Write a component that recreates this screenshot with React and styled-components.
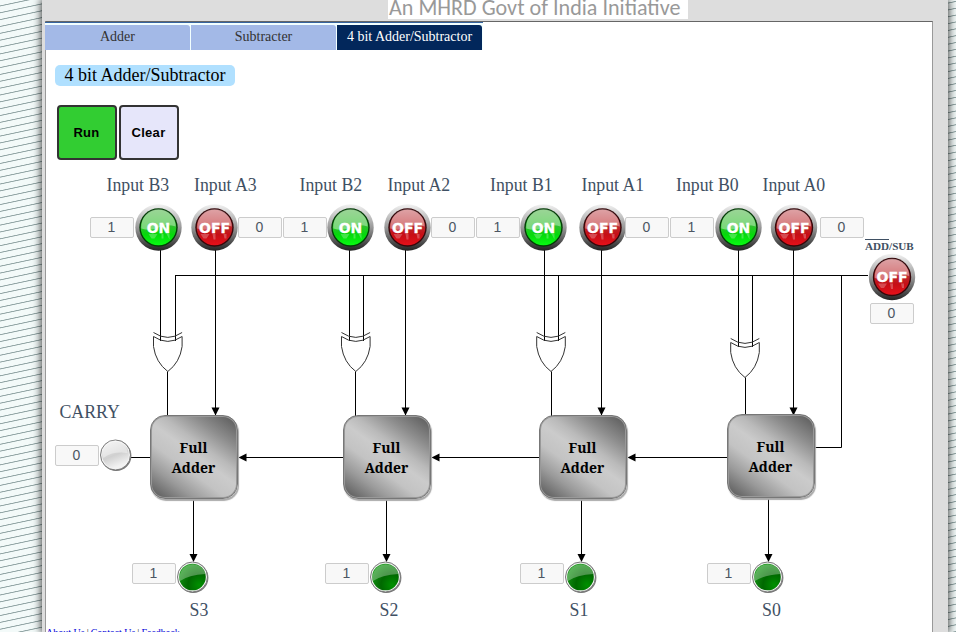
import React from "react";
import styled, { createGlobalStyle, css } from "styled-components";

const Global = createGlobalStyle`
  html, body { margin: 0; padding: 0; overflow: hidden; }
  * { box-sizing: border-box; }
`;

const Page = styled.div`
  display: flex;
  width: 956px;
  height: 632px;
  overflow: hidden;
  background: repeating-linear-gradient(168deg, #f3faf9 0 5px, #93a6a6 5.6px 6px, #f3faf9 6.7px);
  font-family: "Liberation Serif", "Times New Roman", serif;
`;

const Sheet = styled.div`
  width: 906px;
  margin-left: 42px;
  padding: 0 15px 0 3px;
  display: flex;
  flex-direction: column;
  background: #dddddd;
  box-shadow: 0 0 8px 1px rgba(0, 0, 0, 0.75);
`;

const Banner = styled.header`
  height: 21px;
  padding-left: 343px;
  flex: none;
`;

const Tagline = styled.div`
  width: 300px;
  height: 19px;
  padding-left: 1px;
  background: #fff;
  color: #999;
  font: 22.1px/26px Carlito, "Open Sans", sans-serif;
  white-space: nowrap;
`;

const TaglineText = styled.div`
  position: relative;
  top: -5px;
`;

const Panel = styled.main`
  flex: 1;
  display: flex;
  flex-direction: column;
  background: #fff;
  border: solid #999;
  border-top-color: #666;
  border-width: 1px 1px 0 1px;
`;

const Tabs = styled.nav`
  display: flex;
  gap: 1px;
  width: 438px;
  height: 28px;
  margin-left: -1px;
  flex: none;
  border-top: 1px solid #36649f;
  background: #f2ffff;
`;

const Tab = styled.button`
  width: 145px;
  height: 25px;
  margin-top: 2px;
  padding: 0 0 2px;
  border: 0;
  border-top-right-radius: 3px;
  font: 14px/23px "Liberation Serif", serif;
  background: ${(p) => (p.$active ? "#02275b" : "#a3b9e7")};
  color: ${(p) => (p.$active ? "#fff" : "#333")};
`;

const Heading = styled.h1`
  align-self: flex-start;
  width: 180px;
  height: 21px;
  margin: 15px 0 0 9px;
  border-radius: 5px;
  background: #b0e0ff;
  font: 18px/21px "Liberation Serif", serif;
  text-align: center;
  white-space: nowrap;
`;

const Actions = styled.div`
  display: flex;
  gap: 2px;
  margin: 19px 0 0 11px;
`;

const Action = styled.button`
  width: 60px;
  height: 55px;
  padding: 0 1px 0 0;
  border: 2px solid #333;
  border-radius: 4px;
  background: ${(p) => (p.$primary ? "#32cd32" : "#e6e6fa")};
  color: #000;
  font: bold 13px "Liberation Sans", Arial, sans-serif;
  letter-spacing: 0.3px;
`;

/* Free canvas laid over the panel; its coordinates are page coordinates. */
const Canvas = styled.section`
  position: absolute;
  left: 0;
  top: 0;
  width: 956px;
  height: 632px;
  pointer-events: none;
`;

const Wires = styled.svg`
  position: absolute;
  left: 0;
  top: 0;
`;

const at = css`
  position: absolute;
  left: ${(p) => p.$x}px;
  top: ${(p) => p.$y}px;
`;

const Label = styled.span`
  ${at}
  color: #3f5063;
  font-size: 17.8px;
  line-height: 20px;
  white-space: nowrap;
`;

const ModeLabel = styled.span`
  ${at}
  color: #3f5063;
  font-size: 11.1px;
  font-weight: bold;
  line-height: 12px;
`;

const Overlined = styled.span`
  display: inline-block;
  border-top: 1px solid #3f5063;
`;

const Value = styled.output`
  ${at}
  width: 44px;
  height: 21px;
  padding-right: 1px;
  border: 1px solid #ccc;
  border-radius: 2px;
  background: #f8f8f8;
  color: #4d5663;
  font: 14px/19px "Liberation Sans", Arial, sans-serif;
  text-align: center;
`;

const AdderBox = styled.div`
  ${at}
  width: 88px;
  height: 84px;
  display: flex;
  align-items: center;
  justify-content: center;
  padding: 1px 1px 0 0;
  border: 1px solid #777;
  border-radius: 15px;
  background: linear-gradient(33deg, #666 2%, #8c8c8c 16%, #b8b8b8 33%, #c9c9c9 44%, #b4b4b4 56%, #9b9b9b 74%, #656565 96%);
  background: linear-gradient(36deg, #606060 4%, #9a9a9a 22%, #c3c3c3 38%, #cbcbcb 52%, #bababa 62%, #8d8d8d 78%, #606060 96%);
  box-shadow: 1px 2px 1px #aaa, inset 0 0 0 1px #999;
  color: #000;
  font: bold 14px/20px "Noto Serif", "DejaVu Serif Condensed", "DejaVu Serif", serif;
  text-align: center;
`;

const Footer = styled.footer`
  display: flex;
  gap: 2px;
  margin-top: auto;
  height: 4px;
  color: #333;
  font-size: 10px;
  line-height: 10px;
`;

const FooterLink = styled.a`
  color: #0000d8;
  text-decoration: none;
`;

const Toggle = ({ x, y = 227.5, on }) => (
  <g transform={`translate(${x} ${y})`} stroke="none">
    <circle r="23.2" fill="url(#rim)" />
    <circle r="19.2" fill={on ? "#023d05" : "#35070a"} />
    <circle r="17.8" fill={on ? "url(#green)" : "url(#red)"} />
    <path d="M-17.2-1A17.2 17.2 0 0 1 17.2-1Q8-4 0 0T-17.2 1Z" fill="#fff" opacity=".38" />
    <text
      y="5"
      textAnchor="middle"
      textLength={on ? 23.5 : 31}
      lengthAdjust="spacingAndGlyphs"
      fontFamily="DejaVu Sans"
      fontWeight="bold"
      fontSize="13.5"
      fill="#fff"
      stroke="#fff"
      strokeWidth=".3"
    >
      {on ? "ON" : "OFF"}
    </text>
    <path d={on ? "M-10 6.5H-1L-4 11H-7ZM3 6.5H5V11H3ZM8 6.5H11V12Z" : "M-14 6.5H-5L-8 11H-11ZM-2 6.5H1V12H-1ZM9 6.5H12V11H10Z"} fill="#fff" opacity=".25" />
  </g>
);

const Lamp = ({ x, y, lit }) => (
  <g transform={`translate(${x} ${y})`} stroke="none">
    <circle r="15.2" cx=".7" cy=".7" fill="#777" />
    <circle r="15" fill="#f2f2f2" stroke="#777" />
    <circle r="13.3" fill={lit ? "url(#lit)" : "url(#unlit)"} />
    {lit ? (
      <path d="M-12.5 4A12.8 12.8 0 1 1 13-3Q-4-2-12.5 4Z" fill="#fff" opacity=".3" />
    ) : (
      <path d="M-12 3A12.5 12.5 0 1 1 12-2Q-3-4-12 3Z" fill="#fff" opacity=".4" />
    )}
  </g>
);

const Gate = ({ x, y }) => (
  <g transform={`translate(${x} ${y})`} fill="none" stroke="#333" strokeWidth="1">
    <path d="M-14.3 0Q0 9.8 14.3 0" />
    <path d="M-14.3 4Q0 13.8 14.3 4V14Q12 30 0 39Q-12 30-14.3 14Z" />
  </g>
);

const Down = ({ x, y }) => <path d={`M${x - 4} ${y - 8}h8l-4 8Z`} fill="#000" stroke="none" />;
const Left = ({ x, y }) => <path d={`M${x} ${y}l8-4v8Z`} fill="#000" stroke="none" />;

const stages = [
  { n: 3, bLabel: 106.5, aLabel: 194, bBox: 90, aBox: 238, on: 158.5, off: 214.5, bw: 160.5, cw: 175.5, aw: 215.5, gate: 167.8, gy: 332.5, adder: 150, ay: 415, sum: 193.5, sBox: 132, s: 189.5 },
  { n: 2, bLabel: 299.5, aLabel: 387.5, bBox: 283, aBox: 431, on: 350.5, off: 407.5, bw: 349.5, cw: 363.5, aw: 405.5, gate: 355.8, gy: 332.5, adder: 343, ay: 415, sum: 386.5, sBox: 325, s: 379.5 },
  { n: 1, bLabel: 490, aLabel: 581.5, bBox: 476, aBox: 625, on: 543.5, off: 602.5, bw: 544.5, cw: 558.5, aw: 601.5, gate: 551, gy: 332.5, adder: 539, ay: 415, sum: 581.5, sBox: 520, s: 569.5 },
  { n: 0, bLabel: 676, aLabel: 762.5, bBox: 670, aBox: 820, on: 738.5, off: 794, bw: 738.5, cw: 752.5, aw: 793.5, gate: 745, gy: 338.5, adder: 727, ay: 414, sum: 768.5, sBox: 707, s: 762 },
];

const Schematic = () => (
  <Wires width="956" height="632" viewBox="0 0 956 632">
    <defs>
      <linearGradient id="rim" x2="0" y2="1">
        <stop stopColor="#f2f2f2" />
        <stop offset=".5" stopColor="#999" />
        <stop offset="1" stopColor="#222" />
      </linearGradient>
      <linearGradient id="green" x2="0" y2="1">
        <stop stopColor="#5dbb55" />
        <stop offset=".48" stopColor="#2cc12c" />
        <stop offset=".7" stopColor="#05d90b" />
        <stop offset="1" stopColor="#08fb13" />
      </linearGradient>
      <linearGradient id="red" x2="0" y2="1">
        <stop stopColor="#c9686d" />
        <stop offset=".5" stopColor="#bd2529" />
        <stop offset=".7" stopColor="#c60e15" />
        <stop offset="1" stopColor="#e5101a" />
      </linearGradient>
      <radialGradient id="lit" cx=".75" cy=".8" r=".85">
        <stop stopColor="#009000" />
        <stop offset=".5" stopColor="#006800" />
        <stop offset="1" stopColor="#159415" />
      </radialGradient>
      <linearGradient id="unlit" x2=".4" y2="1">
        <stop stopColor="#eee" />
        <stop offset=".6" stopColor="#d0d0d0" />
        <stop offset="1" stopColor="#f2f2f2" />
      </linearGradient>
    </defs>
    <g stroke="#000" fill="none">
      <path d="M868 275.5H175" />
      <path d="M841.5 275V447.5H814" />
      <path d="M131 457.5H151" />
      {stages.map((s) => (
        <g key={s.n}>
          <path d={`M${s.bw} 250V${s.gy + 8.5}M${s.cw} 275V${s.gy + 8.5}M${s.aw} 250V416M${s.sum} 499V556`} />
          <path d={`M${Math.floor(s.gate) + 0.5} ${s.gy + 39}V416`} />
          <Gate x={s.gate} y={s.gy} />
          <Down x={s.aw} y={415.5} />
          <Down x={s.sum} y={562} />
          <Toggle x={s.on} on />
          <Toggle x={s.off} />
          <Lamp x={s.sum - 1} y={577} lit />
        </g>
      ))}
      <path d="M240 457.5H344M433 457.5H540M629 457.5H728" />
      <Left x={238.5} y={457.5} />
      <Left x={431.5} y={457.5} />
      <Left x={627.5} y={457.5} />
      <Toggle x={892} y={277} />
      <Lamp x={115.5} y={455} />
    </g>
  </Wires>
);

export default function App() {
  return (
    <>
      <Global />
      <Page>
        <Sheet>
          <Banner>
            <Tagline>
              <TaglineText>An MHRD Govt of India Initiative</TaglineText>
            </Tagline>
          </Banner>
          <Panel>
            <Tabs>
              <Tab>Adder</Tab>
              <Tab>Subtracter</Tab>
              <Tab $active>4 bit Adder/Subtractor</Tab>
            </Tabs>
            <Heading>4 bit Adder/Subtractor</Heading>
            <Actions>
              <Action $primary>Run</Action>
              <Action>Clear</Action>
            </Actions>
            <Footer>
              <FooterLink>About Us</FooterLink>|<FooterLink>Contact Us</FooterLink>|<FooterLink>Feedback</FooterLink>
            </Footer>
          </Panel>
        </Sheet>
      </Page>
      <Canvas>
        <Schematic />
        {stages.map((s) => (
          <React.Fragment key={s.n}>
            <Label $x={s.bLabel} $y={175}>Input B{s.n}</Label>
            <Label $x={s.aLabel} $y={175}>Input A{s.n}</Label>
            <Value $x={s.bBox} $y={217}>1</Value>
            <Value $x={s.aBox} $y={217}>0</Value>
            <AdderBox $x={s.adder} $y={s.ay}>Full<br />Adder</AdderBox>
            <Value $x={s.sBox} $y={563}>1</Value>
            <Label $x={s.s} $y={600}>S{s.n}</Label>
          </React.Fragment>
        ))}
        <ModeLabel $x={865} $y={239}><Overlined>ADD</Overlined>/SUB</ModeLabel>
        <Value $x={870} $y={303}>0</Value>
        <Label $x={59.5} $y={402}>CARRY</Label>
        <Value $x={55} $y={445}>0</Value>
      </Canvas>
    </>
  );
}
